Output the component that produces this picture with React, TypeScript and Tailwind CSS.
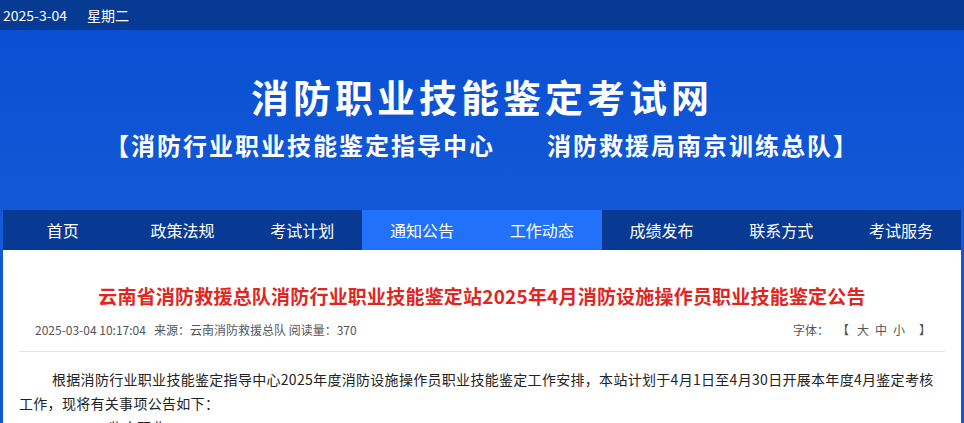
import React from "react";

const navItems = [
  { label: "首页", active: false },
  { label: "政策法规", active: false },
  { label: "考试计划", active: false },
  { label: "通知公告", active: true },
  { label: "工作动态", active: true },
  { label: "成绩发布", active: false },
  { label: "联系方式", active: false },
  { label: "考试服务", active: false },
];

const font = { fontFamily: '"Noto Sans CJK SC", "Noto Sans", sans-serif' };

export default function App() {
  return (
    <div className="min-h-screen bg-[#1259d6] text-[#333]" style={font}>
      {/* Date strip */}
      <div className="flex h-[30px] items-center gap-[20px] bg-[#063a93] px-[3px] text-[14px] text-white">
        <span>2025-3-04</span>
        <span>星期二</span>
      </div>

      {/* Site banner */}
      <div className="flex h-[180px] flex-col items-center bg-gradient-to-b from-[#0a4fd4] to-[#1259d6] pt-[43px] text-white">
        <h1 className="text-[38px] font-bold leading-[46px] tracking-[4px]">消防职业技能鉴定考试网</h1>
        <p className="mt-[10px] text-[24px] font-bold leading-[32px] tracking-[2px]">
          【消防行业职业技能鉴定指导中心<span className="inline-block w-[52px]" />消防救援局南京训练总队】
        </p>
      </div>

      <div className="mx-auto w-[958px]">
        {/* Main navigation */}
        <nav className="grid h-[40px] grid-cols-8 bg-[#083a94]">
          {navItems.map((item) => (
            <a
              key={item.label}
              href="#"
              className={`flex items-center justify-center text-[16px] text-white ${
                item.active ? "bg-[#2271fb]" : ""
              }`}
            >
              {item.label}
            </a>
          ))}
        </nav>

        {/* Article */}
        <div className="bg-white px-[16px] pt-[32px] pb-[20px]">
          <h2 className="text-center text-[19px] font-bold leading-[28px] tracking-[0.2px] text-[#e0261f]">
            云南省消防救援总队消防行业职业技能鉴定站2025年4月消防设施操作员职业技能鉴定公告
          </h2>
          <div className="mt-[11px] flex items-center justify-between pl-[16px] pr-[14px] text-[12px] text-[#555]">
            <span>
              2025-03-04 10:17:04<span className="inline-block w-[8px]" />来源：云南消防救援总队 阅读量：370
            </span>
            <span className="flex gap-[8px]">
              <span>字体：</span>
              <span>【</span>
              <span className="tracking-[6px]">大中小</span>
              <span>】</span>
            </span>
          </div>
          <div className="mt-[12px] border-t border-[#e5e5e5]" />
          <div className="pt-[15px] text-[14px] leading-[24px] tracking-[0.3px] text-[#222]">
            <p className="indent-[33px]">
              根据消防行业职业技能鉴定指导中心2025年度消防设施操作员职业技能鉴定工作安排，本站计划于4月1日至4月30日开展本年度4月鉴定考核工作，现将有关事项公告如下：
            </p>
            <p className="indent-[61px]">一、鉴定职业</p>
          </div>
        </div>
      </div>
    </div>
  );
}
